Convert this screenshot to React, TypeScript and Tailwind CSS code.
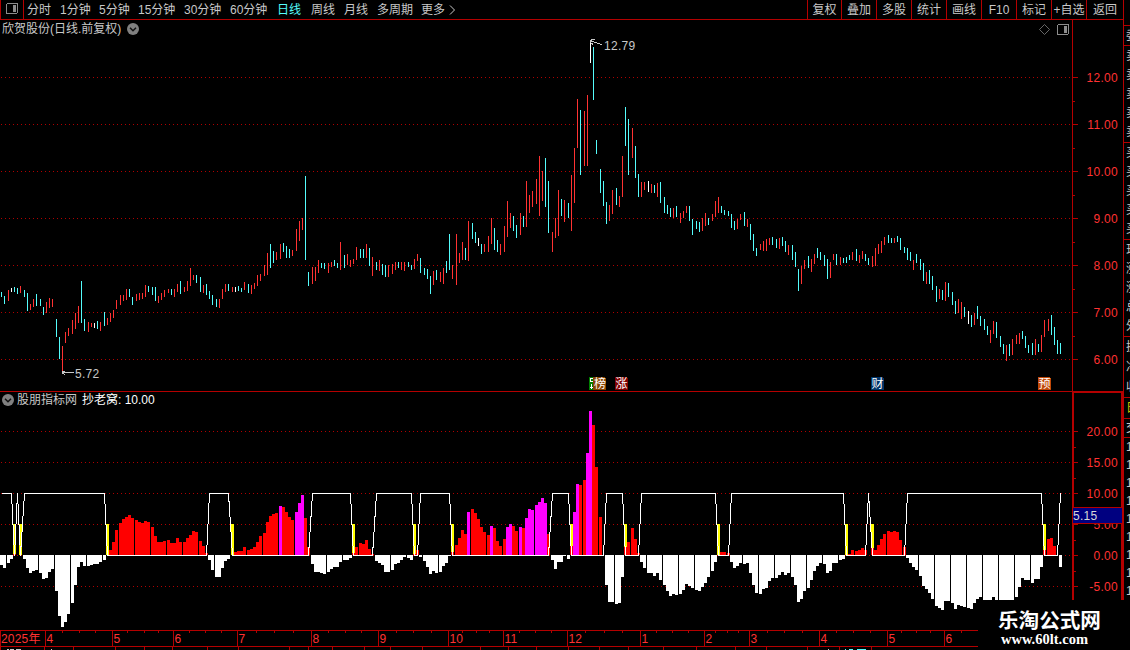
import React from 'react';

const CJK = "font-['Liberation_Sans','Noto_Sans_CJK_SC',sans-serif]";

// Five sessions occupy sixteen pixels.
const OFFSETS = [1, 4, 8, 11, 14];
const sessionX = (k: number) => 16 * Math.floor(k / 5) + OFFSETS[k % 5];

// Daily ranges: r = up, c = down, w = unchanged, followed by top-bottom.
const CANDLES = `
c292-297 c296-304 r290-301 w288-292 c287-292 c288-294 r286-293 c290-297 c293-311 r304-310
r299-307 c294-306 c299-306 c307-315 r302-313 r298-308 r299-307 c319-337 c337-359 r346-372
r332-343 r328-336 r320-334 r313-329 r306-323 c281-323 c319-331 r322-332 r323-327 w323-328
c321-329 r322-331 c312-326 r318-325 r313-322 r310-318 r300-309 r295-305 r295-301 r289-300
c289-297 c297-305 r294-301 r293-300 r293-299 r285-297 c286-292 c287-295 c287-301 r296-303
r293-300 r290-297 r289-293 c289-295 r289-297 r284-292 c281-294 r287-292 r281-291 r268-286
r275-280 c275-283 c277-292 r285-293 c284-295 c291-299 c295-305 c299-307 r299-308 r289-299
r284-292 c284-291 r287-292 w287-292 c286-291 c288-292 r282-290 c284-293 r285-294 r283-289
r275-286 r274-281 r265-276 r253-275 c244-268 c251-263 r252-260 r244-259 c243-252 c246-258
c249-258 r250-256 r229-251 r221-241 r218-230 c176-260 c272-286 r267-284 r267-281 r260-273
c263-268 c263-269 r263-273 r262-267 c260-266 c263-268 r242-270 c255-268 r254-265 r260-267
r259-264 r247-260 c249-258 c249-258 r244-258 c248-266 r257-276 c262-270 r260-271 c264-275
c265-277 r265-277 r264-274 r262-270 c262-268 r262-270 r262-271 c262-267 c265-270 r259-269
r254-261 c258-273 c268-275 c269-279 c276-294 r271-285 c270-280 r272-282 r268-284 c261-273
c234-270 r265-279 r234-285 r253-263 r242-260 c248-260 r221-261 c223-239 c232-243 w238-246
c244-254 r244-252 r236-252 r218-244 c228-250 c240-252 r244-255 r226-252 r201-237 r213-228
c216-231 c225-238 r213-235 c216-227 r181-227 r195-213 r191-207 r179-204 r156-216 r171-201
c158-207 c181-233 r232-252 r218-238 r190-236 c199-216 r200-222 c203-218 r175-231 r148-203
r99-148 c110-175 r111-166 r95-166 w40-63 c47-100 c140-154 c169-193 c181-206 c202-224
r205-221 r190-214 c188-205 r196-207 r156-197 c107-146 c119-175 r128-158 c146-178 c174-197
r182-197 r182-190 w181-192 r184-193 c185-193 r183-197 c182-203 c197-213 c205-214 c208-217
r208-218 c206-217 r213-223 r211-218 r206-213 c206-221 c219-235 c221-229 c222-232 r218-231
r213-226 c218-225 r214-221 r201-217 r197-213 c206-213 c210-215 c211-216 c214-228 c221-230
r219-229 r214-220 c212-226 r219-227 c224-240 c234-251 c248-256 r244-250 r241-251 r239-251
r238-245 c237-245 c239-248 r238-249 c237-246 c241-252 r245-255 c245-260 c252-267 c269-291
r266-284 r260-269 c256-268 r259-272 r254-264 c248-258 c252-260 c255-266 c259-279 r262-278
r254-260 c254-265 r257-265 c258-263 c257-263 c255-260 r252-260 c249-261 r255-263 r251-259
c254-261 c258-265 r256-267 r248-266 r244-254 r241-253 r237-245 c235-243 c238-243 r238-243
c236-242 c238-250 c247-253 c248-260 c252-261 r260-270 c254-263 c259-270 c263-281 r272-284
c270-284 c276-290 c286-302 r289-299 c290-300 r282-301 c283-297 c292-305 c301-314 r299-313
r302-319 c307-317 w311-324 c315-327 r313-325 c306-319 c316-326 c319-330 c326-335 r330-343
r321-334 c322-338 c336-347 c344-354 r345-361 c344-356 r339-355 r335-344 r333-344 c331-339
c336-348 c345-353 c343-355 r339-355 c344-352 r335-352 r320-337 r319-331 c315-335 c327-345
c340-354 c343-354`.trim().split(/\s+/);

// Indicator: n = negative bar end, r/m = positive bar top, y = signal bar end, 0 = none.
const BARS = `
n565 n568 n563 n559 y554 0 y555 n559 n568 n573 n571 n570 n573 n579 n578
n572 n569 n591 n616 n627 n622 n614 n603 n585 n567 n562 n566 n566 n565 n564
n564 n562 n560 y555 r550 r542 r530 r523 r519 r517 r515 r518 r520 r522 r523
r521 r522 r527 r536 r542 r542 r541 r540 r543 r543 r538 r542 r542 r538 r535
r531 r532 r541 r546 r553 n560 n570 n577 n577 n568 n561 n559 y555 r552 r551
r551 r547 r550 r549 r547 r542 r536 r533 r522 r516 r514 r513 m506 r507 r512
r517 r520 m512 m503 m495 r518 r547 n564 n572 n572 n573 n574 n572 n569 n567
n567 n562 n560 n560 n558 y553 r547 r543 r544 r540 r549 r554 n561 n563 n565
n572 n572 n570 n564 n563 n560 n557 n558 n560 y554 r550 n557 n561 n567 n574
n571 n573 n572 n566 n563 n556 y552 r545 r538 r530 r534 m512 r509 r513 r519
r527 r532 r535 m526 r528 r541 r546 r539 m527 m524 r526 r531 m527 r528 m518
m509 m510 m505 m502 m498 m503 r534 n560 n569 n562 n562 n556 n559 y546 m512
m484 r485 r480 m453 m411 r425 r467 r517 0 n585 n602 n602 n604 n603 n577
y547 r542 r528 r539 r553 n562 n568 n573 n573 n576 n573 n580 n585 n591 n596
n594 n595 n594 n590 n584 n586 n588 n590 n591 n587 n583 n577 n571 n562 y555
r552 r552 r553 n562 n568 n566 n563 n564 n563 n573 n585 n593 n594 n589 n588
n581 n578 n578 n575 n572 n575 n573 n577 n585 n602 n599 n591 n588 n580 n571
n566 n563 n564 n573 n571 n563 n563 n560 n559 y555 r554 r550 r551 r550 r548
r550 0 y548 r550 r545 r539 r534 r531 r532 r531 r532 r540 r547 n558 n563
n567 n570 n576 n586 n589 n593 n599 n606 n608 n610 n601 n601 n603 n609 n605
n606 n607 n608 n609 n603 n599 n597 n600 n600 n600 n597 n600 n600 n600 n600
n600 n600 n597 n587 n578 n580 n580 n583 n579 n579 n567 y550 r539 r538 r546
0 n567`.trim().split(/\s+/);

const PEAKS = [5, 271];
const CANDLE_COLORS: Record<string, string> = { r: '#ff3232', c: '#54fcfc', w: '#ffffff' };

const linePoints = BARS.map((b, k) => {
  const high = b[0] === 'n' || PEAKS.includes(k);
  return `${sessionX(k) + 0.5},${high ? 493.5 : 555.5}`;
}).join(' ');

function Grid({ rows }: { rows: number[] }) {
  return (
    <>
      {rows.map((y) => (
        <line key={y} x1={1} x2={1072} y1={y + 0.5} y2={y + 0.5} stroke="#b00000" strokeDasharray="1 3" />
      ))}
    </>
  );
}

function PriceChart() {
  return (
    <svg className="block h-[353px] w-[1072px]" viewBox="0 38 1072 353" shapeRendering="crispEdges">
      <Grid rows={[77, 124, 171, 218, 265, 312, 359]} />
      {CANDLES.map((c, k) => {
        const [top, bottom] = c.slice(1).split('-').map(Number);
        return <rect key={k} x={sessionX(k)} y={top} width={1} height={bottom - top} fill={CANDLE_COLORS[c[0]]} />;
      })}
      <g stroke="#c8c8c8" fill="none">
        <path d="M62.5 372.5H74M62.5 372.5l3 -2M62.5 372.5l3 3M62 371.5h2M62 373.5h2" />
        <path d="M590.5 41.5L594 42L598 43.5L602 44.5M590.5 41.5l1 -2h3M590.5 42.5l2.5 2" />
      </g>
      <g fill="#c8c8c8" fontSize="12" letterSpacing="0.3" className={CJK}>
        <text x="75" y="378">5.72</text>
        <text x="604" y="50">12.79</text>
      </g>
      <rect x={589} y={377} width={4} height={13} fill="#008000" />
      <path d="M593 377h11l2 2v11h-13z" fill="#884400" />
      <path d="M615 377h11l2 2v11h-13z" fill="#800000" />
      <path d="M871 377h11l2 2v11h-13z" fill="#003468" />
      <path d="M1038 377h11l2 2v11h-13z" fill="#c04808" />
      <path d="M590.5 378v4M591 378.5h2M591 381.5h2M591.5 384v5M590 387.5h3" stroke="#fff" />
      <g fill="#fff" fontSize="12" className={CJK}>
        <text x="594" y="388">榜</text>
        <text x="615.5" y="388">涨</text>
        <text x="871.5" y="388">财</text>
        <text x="1038.5" y="388">预</text>
      </g>
    </svg>
  );
}

function IndicatorChart() {
  return (
    <svg className="block h-[222px] w-[1072px]" viewBox="0 408 1072 222" shapeRendering="crispEdges">
      <Grid rows={[431, 462, 493, 524, 555, 586]} />
      {BARS.map((b, k) => {
        const x = sessionX(k) - 1;
        const v = Number(b.slice(1));
        if (b[0] === 'n') return <rect key={k} x={x} y={555} width={3} height={v - 555} fill="#fff" />;
        if (b[0] === 'r') return <rect key={k} x={x} y={v} width={3} height={555 - v} fill="#ff0000" />;
        if (b[0] === 'm') return <rect key={k} x={x} y={v} width={3} height={555 - v} fill="#ff00ff" />;
        if (b[0] === 'y')
          return (
            <g key={k}>
              <rect x={x} y={524} width={3} height={31} fill="#ff0000" />
              <rect x={x} y={524} width={3} height={v - 524} fill="#ffff00" />
            </g>
          );
        return null;
      })}
      <polyline points={linePoints} fill="none" stroke="#fff" />
    </svg>
  );
}

const MONTHS: [number, string][] = [
  [45, '4'], [112, '5'], [173, '6'], [237, '7'], [311, '8'], [378, '9'], [448, '10'], [503, '11'],
  [567, '12'], [640, '1'], [704, '2'], [749, '3'], [819, '4'], [887, '5'], [944, '6'],
];
const WEEKS = [
  62, 79, 95, 127, 144, 158, 189, 205, 221, 256, 274, 293, 328, 345, 361, 396, 413, 431, 462, 476, 489, 519, 535,
  551, 585, 604, 622, 656, 672, 688, 715, 727, 738, 767, 784, 802, 836, 853, 870, 901, 916, 930, 961,
];
const LOWER = [
  44, 73, 115, 144, 172, 207, 238, 289, 308, 332, 364, 390, 422, 480, 508, 536, 568, 599, 628, 663, 696, 735, 766,
  807, 839, 871,
];

function TimeAxis() {
  return (
    <svg className="block h-5 w-[1123px]" viewBox="0 630 1123 20" shapeRendering="crispEdges">
      <g fill="#b40000">
        <rect x={0} y={630} width={1123} height={1} />
        <rect x={0} y={646} width={1123} height={1} />
        <rect x={0} y={630} width={1} height={20} />
        {MONTHS.map(([x]) => <rect key={x} x={x} y={630} width={1} height={16} />)}
        {WEEKS.map((x) => <rect key={x} x={x} y={631} width={1} height={2} />)}
        {LOWER.map((x) => <rect key={x} x={x} y={647} width={1} height={3} />)}
      </g>
      <g fill="#ff3232" fontSize="12" letterSpacing="0.2" className={CJK}>
        <text x="1" y="643">2025年</text>
        {MONTHS.map(([x, m]) => <text key={x} x={x + 1.5} y="643">{m}</text>)}
      </g>
      <path d="M7 649.5h2M10 649.5h4M16 649.5h5M51 649.5h1M828 649.5h1" stroke="#c8c8c8" />
      <path d="M845 649.5h1M849 649.5h4M857 649.5h9" stroke="#54fcfc" />
    </svg>
  );
}

const PERIODS: [string, string][] = [
  ['分时', 'w-[33px]'], ['1分钟', 'w-[39px]'], ['5分钟', 'w-[39px]'], ['15分钟', 'w-[46px]'],
  ['30分钟', 'w-[46px]'], ['60分钟', 'w-[47px]'], ['日线', 'w-[34px]'], ['周线', 'w-[33px]'],
  ['月线', 'w-[33px]'], ['多周期', 'w-[44px]'], ['更多', 'w-[27px]'],
];
const ACTIONS: [string, string][] = [
  ['复权', 'w-[34px]'], ['叠加', 'w-[35px]'], ['多股', 'w-[35px]'], ['统计', 'w-[35px]'], ['画线', 'w-[35px]'],
  ['F10', 'w-[35px]'], ['标记', 'w-[35px]'], ['+自选', 'w-[35px]'], ['返回', 'w-[37px]'],
];

function PanelIcon() {
  return (
    <svg width="12" height="11" viewBox="0 0 12 11" shapeRendering="crispEdges">
      <rect x="0.5" y="0.5" width="11" height="10" rx="1.5" fill="none" stroke="#8c8c8c" />
      <rect x="7" y="2" width="3" height="7" fill="#8c8c8c" />
    </svg>
  );
}

function DropIcon() {
  return (
    <svg width="12" height="12" viewBox="0 0 12 12">
      <circle cx="6" cy="6" r="6" fill="#808080" />
      <path d="M3 4.7l3 3 3-3" fill="none" stroke="#111" strokeWidth="1.5" />
    </svg>
  );
}

function Toolbar() {
  return (
    <header className="flex h-5 w-[1123px] shrink-0 border-b border-l border-[#b40000] text-[#c8c8c8]">
      <div className="flex w-[23px] items-center justify-center border-r border-[#b40000] pr-px pb-0.5">
        <PanelIcon />
      </div>
      <nav className="flex items-center pl-[3px]">
        {PERIODS.map(([label, width]) => (
          <span key={label} className={`${width} ${label === '日线' ? 'text-[#54fcfc]' : ''}`}>{label}</span>
        ))}
        <svg width="8" height="10" viewBox="0 0 8 10">
          <path d="M2 0.5l4.5 4.5L2 9.5" fill="none" stroke="#c8c8c8" />
        </svg>
      </nav>
      <div className="ml-auto flex">
        {ACTIONS.map(([label, width]) => (
          <span key={label} className={`${width} flex items-center justify-center border-l border-[#b40000]`}>
            {label}
          </span>
        ))}
      </div>
    </header>
  );
}

function AxisScale({ labels, first, step, heavy }: { labels: string[]; first: number; step: number; heavy?: boolean }) {
  const left = heavy ? 2 : 1;
  return (
    <svg className="block h-full w-full" shapeRendering="crispEdges">
      {labels.map((label, i) => {
        const y = first + i * step;
        const last = i === labels.length - 1;
        return (
          <g key={label}>
            <rect x={0} y={y} width={heavy ? 4 : 5} height={1} fill="#b40000" />
            {!last && <rect x={0} y={y + Math.floor(step / 2) + (heavy ? 1 : 1)} width={2} height={1} fill="#b40000" />}
            <text x={46 - left} y={y + 5} textAnchor="end" fontSize="12" letterSpacing="0.3" fill="#ff3232" className={CJK}>
              {label}
            </text>
          </g>
        );
      })}
    </svg>
  );
}

const STRIP: { rows: string[]; box: string; row: string }[] = [
  { rows: ['委'], box: 'h-5', row: 'h-[19px]' },
  { rows: ['卖', '卖', '卖', '卖', '卖'], box: 'h-[97px]', row: 'h-[19px]' },
  { rows: ['买', '买', '买', '买', '买'], box: 'h-[97px]', row: 'h-[19px]' },
  { rows: ['现', '涨', '涨', '总', '外'], box: 'h-[97px]', row: 'h-[19px]' },
  { rows: ['换', '净', '收'], box: 'h-[61px]', row: 'h-5' },
  { rows: ['日'], box: 'h-[21px] text-[#c8c800]', row: 'h-5' },
  { rows: ['交'], box: 'h-[19px]', row: 'h-[18px]' },
  { rows: ['1', '1', '1', '1', '1', '1', '1', '1', '1'], box: 'h-[164px]', row: 'h-[18px]' },
];

function QuoteStrip() {
  return (
    <aside className="h-[650px] w-[7px] shrink-0 overflow-hidden border-l border-[#b40000] pt-[25px] text-[#c8c8c8]">
      {STRIP.map((s, i) => (
        <div key={i} className={`${s.box} border-t border-[#b40000] pl-[2px]`}>
          {s.rows.map((t, j) => (
            <div key={j} className={`${s.row} flex items-center whitespace-nowrap`}>{t}</div>
          ))}
        </div>
      ))}
    </aside>
  );
}

export default function App() {
  return (
    <div className={`relative flex h-[650px] w-[1130px] overflow-hidden bg-black text-[12px] leading-none whitespace-nowrap ${CJK}`}>
      <div className="flex w-[1123px] shrink-0 flex-col">
        <Toolbar />
        <div className="flex h-[371px]">
          <main className="w-[1072px] shrink-0">
            <div className="flex h-[18px] items-center pl-[2px] text-[#c8c8c8]">
              <span className="mr-1.5">欣贺股份(日线.前复权)</span>
              <DropIcon />
              <svg className="mr-[7px] ml-auto" width="11" height="11" viewBox="0 0 11 11">
                <path d="M5.5 0.5l5 5-5 5-5-5z" fill="none" stroke="#808080" strokeWidth="0.8" />
              </svg>
              <div className="mr-[3px]"><PanelIcon /></div>
            </div>
            <PriceChart />
          </main>
          <div className="w-[51px] border-l border-[#b40000]">
            <AxisScale first={57} step={47} labels={['12.00', '11.00', '10.00', '9.00', '8.00', '7.00', '6.00']} />
          </div>
        </div>
        <div className="flex h-[239px] border-t border-[#b40000]">
          <section className="w-[1072px] shrink-0">
            <div className="flex h-4 items-center pl-[2px]">
              <DropIcon />
              <span className="ml-[3px] text-[#c8c8c8]">股朋指标网</span>
              <span className="ml-[5px] text-white">抄老窝: 10.00</span>
            </div>
            <IndicatorChart />
          </section>
          <div className="relative w-[52px] border-t border-r-2 border-l-2 border-[#b40000]">
            <AxisScale heavy first={38} step={31} labels={['20.00', '15.00', '10.00', '5.00', '0.00', '-5.00']} />
            <div className="absolute top-[114px] -left-px flex h-[17px] w-[49px] items-center border-y border-[#b40000] bg-[#000080] tracking-[0.3px] text-[#d8d8d8]">
              5.15
            </div>
          </div>
        </div>
        <TimeAxis />
      </div>
      <QuoteStrip />
      <div className="absolute top-[600px] left-[978px] flex h-[50px] w-[152px] flex-col items-start bg-black text-white">
        <div className="mt-[9px] ml-[20px] font-['Noto_Sans_CJK_SC',sans-serif] text-[20.6px] leading-[20px] font-bold">乐淘公式网</div>
        <div className="ml-[23px] font-['Liberation_Serif',serif] text-[14.5px] leading-[20px] font-bold">www.60lt.com</div>
      </div>
    </div>
  );
}
